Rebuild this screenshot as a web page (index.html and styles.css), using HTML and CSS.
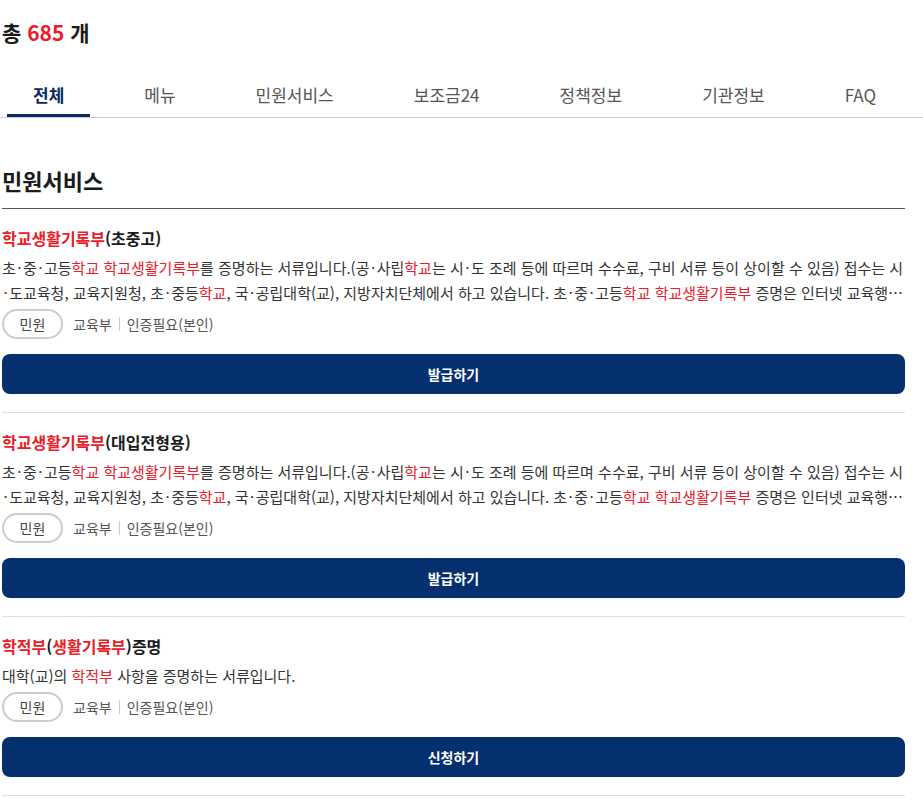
FILE: index.html
```html
<!DOCTYPE html>
<html lang="ko">

<head>
    <meta charset="UTF-8">
    <meta name="viewport" content="width=device-width, initial-scale=1.0">
    <title>통합검색</title>
    <link rel="stylesheet" href="styles.css">
</head>

<body>
    <div id="wrap">
        <h1 class="total">총 <em>685</em> 개</h1>

        <ul class="tabs">
            <li class="on"><a href="javascript:;">전체</a></li>
            <li><a href="javascript:;">메뉴</a></li>
            <li><a href="javascript:;">민원서비스</a></li>
            <li><a href="javascript:;">보조금24</a></li>
            <li><a href="javascript:;">정책정보</a></li>
            <li><a href="javascript:;">기관정보</a></li>
            <li><a href="javascript:;">FAQ</a></li>
        </ul>

        <h2 class="sec-title">민원서비스</h2>

        <ul class="result">
            <li class="item">
                <h3 class="tit"><span class="hl">학교생활기록부</span>(초중고)</h3>
                <p class="desc">초<span class="dot">·</span>중<span class="dot">·</span>고등<span class="hl">학교</span> <span class="hl">학교생활기록부</span>를 증명하는 서류입니다.(공<span class="dot">·</span>사립<span class="hl">학교</span>는 시<span class="dot">·</span>도 조례 등에 따르며 수수료, 구비 서류 등이 상이할 수 있음) 접수는 시&#8203;<span class="dot">·</span>도교육청, 교육지원청, 초<span class="dot">·</span>중등<span class="hl">학교</span>, 국<span class="dot">·</span>공립대학(교), 지방자치단체에서 하고 있습니다. 초<span class="dot">·</span>중<span class="dot">·</span>고등<span class="hl">학교</span> <span class="hl">학교생활기록부</span> 증명은 인터넷 교육행정정보시스템(NEIS)을 통해서도 발급받을 수 있습니다.</p>
                <div class="info">
                    <span class="badge">민원</span>
                    <span class="org">교육부</span>
                    <span class="auth">인증필요(본인)</span>
                </div>
                <a href="javascript:;" class="btn">발급하기</a>
            </li>
            <li class="item">
                <h3 class="tit"><span class="hl">학교생활기록부</span>(대입전형용)</h3>
                <p class="desc">초<span class="dot">·</span>중<span class="dot">·</span>고등<span class="hl">학교</span> <span class="hl">학교생활기록부</span>를 증명하는 서류입니다.(공<span class="dot">·</span>사립<span class="hl">학교</span>는 시<span class="dot">·</span>도 조례 등에 따르며 수수료, 구비 서류 등이 상이할 수 있음) 접수는 시&#8203;<span class="dot">·</span>도교육청, 교육지원청, 초<span class="dot">·</span>중등<span class="hl">학교</span>, 국<span class="dot">·</span>공립대학(교), 지방자치단체에서 하고 있습니다. 초<span class="dot">·</span>중<span class="dot">·</span>고등<span class="hl">학교</span> <span class="hl">학교생활기록부</span> 증명은 인터넷 교육행정정보시스템(NEIS)을 통해서도 발급받을 수 있습니다.</p>
                <div class="info">
                    <span class="badge">민원</span>
                    <span class="org">교육부</span>
                    <span class="auth">인증필요(본인)</span>
                </div>
                <a href="javascript:;" class="btn">발급하기</a>
            </li>
            <li class="item">
                <h3 class="tit"><span class="hl">학적부</span>(<span class="hl">생활기록부</span>)증명</h3>
                <p class="desc">대학(교)의 <span class="hl">학적부</span> 사항을 증명하는 서류입니다.</p>
                <div class="info">
                    <span class="badge">민원</span>
                    <span class="org">교육부</span>
                    <span class="auth">인증필요(본인)</span>
                </div>
                <a href="javascript:;" class="btn">신청하기</a>
            </li>
        </ul>
    </div>
</body>

</html>
```

FILE: styles.css
```css
* {
    margin: 0;
    padding: 0;
    box-sizing: border-box;
    text-decoration: none;
    list-style: none;
}

body {
    font-family: "Noto Sans CJK KR", "Noto Sans", sans-serif;
    color: #222;
    background: #fff;
}

#wrap {
    padding: 0 18px 0 2px;
}

.total {
    padding-top: 17px;
    font-size: 21px;
    font-weight: 700;
    line-height: 30px;
    color: #1a1a1a;
}

.total em {
    font-style: normal;
    color: #e8202a;
}

.tabs {
    display: flex;
    gap: 28px;
    margin: 26px -18px 0 -2px;
    padding-left: 7px;
    border-bottom: 1px solid #ccc;
}

.tabs a {
    display: block;
    padding: 10px 26px 7px;
    font-size: 17px;
    line-height: 24px;
    color: #555;
    border-bottom: 3px solid transparent;
}

.tabs .on a {
    font-weight: 700;
    color: #0b2a63;
    border-bottom-color: #0b2a63;
}

.sec-title {
    margin-top: 47px;
    padding-bottom: 13px;
    font-size: 22px;
    font-weight: 700;
    line-height: 30px;
    color: #1a1a1a;
    border-bottom: 1px solid #555;
}

.item {
    padding: 17px 0 18px;
    border-bottom: 1px solid #e0e0e0;
}

.tit {
    font-size: 16px;
    font-weight: 700;
    line-height: 24px;
    color: #1a1a1a;
}

.hl {
    color: #e8202a;
}

.desc {
    margin-top: 5px;
    font-size: 15px;
    line-height: 25px;
    color: #333;
    display: -webkit-box;
    -webkit-line-clamp: 2;
    -webkit-box-orient: vertical;
    overflow: hidden;
}

/* 가운뎃점은 앞뒤로 조금 띄움 */
.desc .dot {
    margin: 0 1.5px;
}

.info {
    display: flex;
    align-items: center;
    margin-top: 4px;
    font-size: 14px;
    color: #555;
}

.badge {
    width: 61px;
    height: 30px;
    line-height: 26px;
    text-align: center;
    border: 2px solid #ccc;
    border-radius: 15px;
    color: #444;
}

.org {
    margin-left: 10px;
}

.auth {
    margin-left: 7px;
    padding-left: 7px;
    border-left: 1px solid #ccc;
    line-height: 14px;
}

.btn {
    display: block;
    margin-top: 15px;
    height: 40px;
    line-height: 40px;
    text-align: center;
    font-size: 14px;
    font-weight: 700;
    color: #fff;
    background: #04306f;
    border-radius: 8px;
}
```
